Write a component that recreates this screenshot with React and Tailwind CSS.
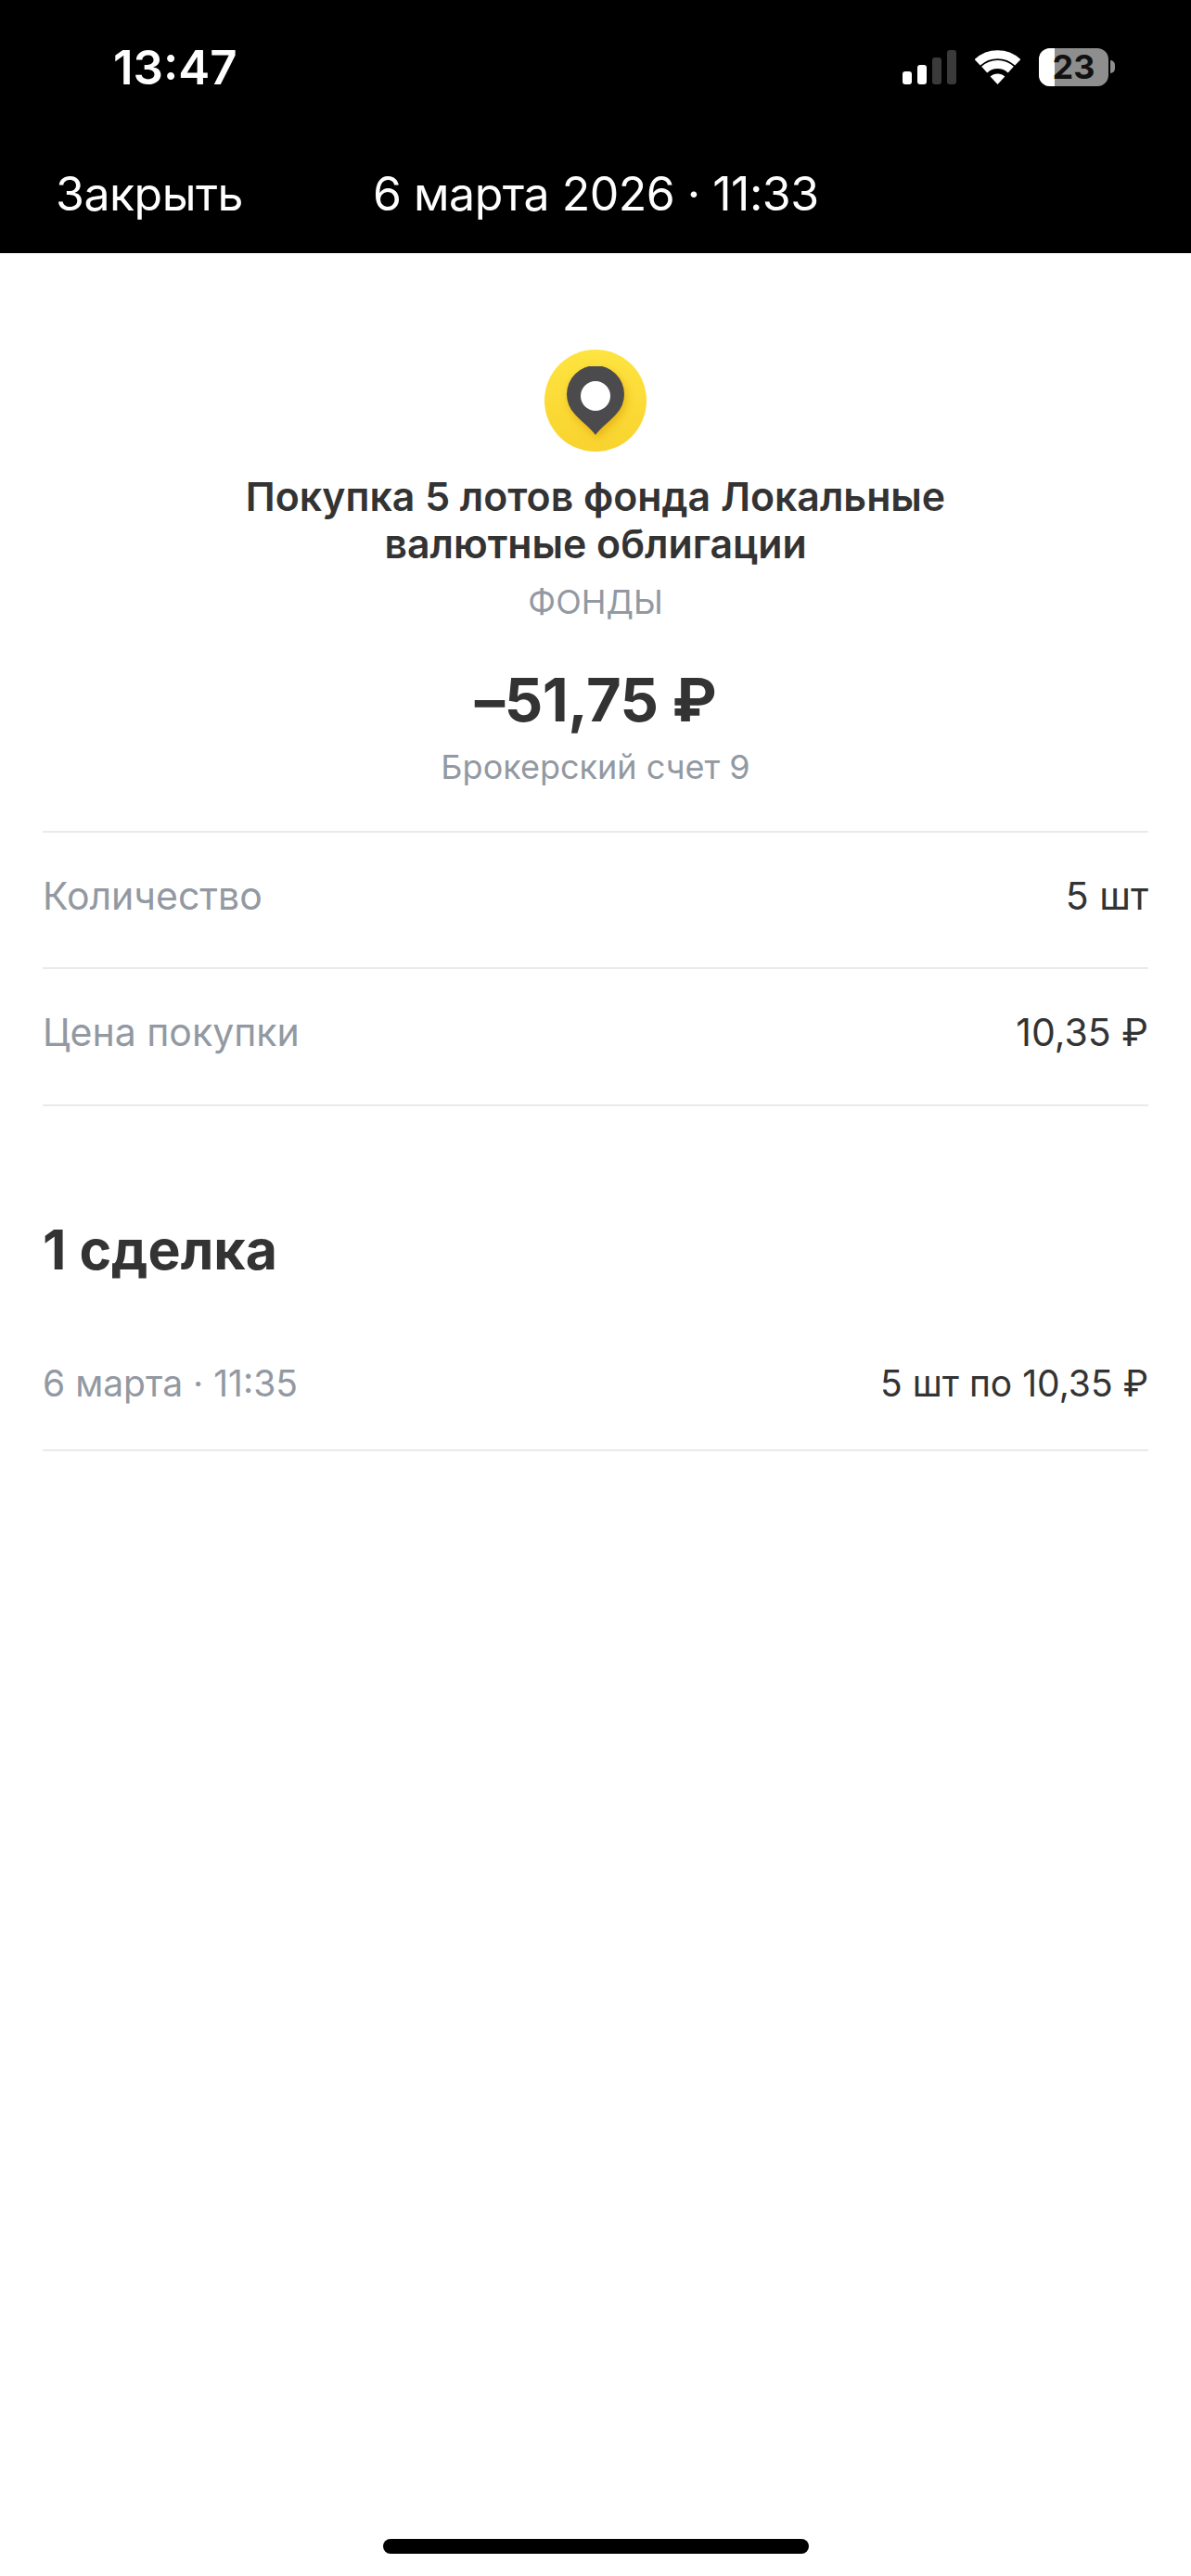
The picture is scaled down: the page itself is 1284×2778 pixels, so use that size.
function StatusIcons() {
  return (
    <div className="flex items-center">
      <div className="flex items-end gap-[6px] h-[37px]">
        <div className="w-[10px] h-[14px] rounded-[3px] bg-white" />
        <div className="w-[10px] h-[21px] rounded-[3px] bg-white" />
        <div className="w-[10px] h-[29px] rounded-[3px] bg-[#3a3a3a]" />
        <div className="w-[10px] h-[37px] rounded-[3px] bg-[#3a3a3a]" />
      </div>
      <svg className="ml-[20px]" width="49" height="37" viewBox="0 0 49 37" fill="none">
        <path d="M2.7 13.3A32 32 0 0 1 46.3 13.3" stroke="#fff" strokeWidth="9" />
        <path d="M10.2 21.1A21 21 0 0 1 38.8 21.1" stroke="#fff" strokeWidth="9" />
        <path d="M24.5 37L16.6 28.6A11.5 11.5 0 0 1 32.4 28.6Z" fill="#fff" />
      </svg>
      <div className="ml-[20px] relative w-[75px] h-[41px] rounded-[12px] overflow-hidden bg-[#8e8e8e] flex items-center justify-center">
        <div className="absolute left-0 top-0 bottom-0 w-[17px] bg-white" />
        <span className="relative text-[36px] font-bold text-[#111] leading-none">23</span>
      </div>
      <div className="ml-[2px] w-[5px] h-[14px] rounded-r-full bg-[#8e8e8e]" />
    </div>
  );
}

function Row({ label, value, className }) {
  return (
    <div className={`flex items-center justify-between border-b-2 border-[#e9eaec] ${className}`}>
      <span className="text-[#9299a2]">{label}</span>
      <span className="text-[#333]">{value}</span>
    </div>
  );
}

export default function App() {
  return (
    <div className="h-[2778px] bg-white flex flex-col font-['Inter',sans-serif]">
      <header className="h-[273px] bg-black text-white shrink-0">
        <div className="flex items-center justify-between pt-[48px] pl-[122px] pr-[82px] h-[96px]">
          <span className="text-[51px] font-semibold leading-none">13:47</span>
          <StatusIcons />
        </div>
        <div className="flex items-center mt-[88px] pl-[60px] text-[50px] leading-none tracking-[-0.5px]">
          <span>Закрыть</span>
          <span className="ml-[140px]">6 марта 2026 · 11:33</span>
        </div>
      </header>

      <main className="px-[46px] flex-1 flex flex-col">
        <section className="flex flex-col items-center text-center border-b-2 border-[#e9eaec] h-[625px] pt-[104px]">
          <div className="w-[110px] h-[110px] rounded-full bg-gradient-to-b from-[#fee440] to-[#f9d32e] flex items-center justify-center">
            <svg width="62" height="74" viewBox="0 0 62 74" className="drop-shadow-[2px_4px_5px_rgba(214,150,0,0.55)]">
              <path d="M31 74C25 66 14 58 9 52A31 31 0 1 1 53 52C48 58 37 66 31 74Z" fill="#4b4b4d" />
              <circle cx="31" cy="32" r="16" fill="#fff" />
            </svg>
          </div>
          <h1 className="mt-[23px] text-[42.8px] leading-[51px] font-semibold text-[#333] w-[800px]">
            Покупка 5 лотов фонда Локальные валютные облигации
          </h1>
          <div className="mt-[15px] text-[36px] leading-[44px] text-[#9299a2]">ФОНДЫ</div>
          <div className="mt-[44px] text-[65px] leading-[80px] font-bold tracking-[-0.5px] text-[#333]">–51,75 ₽</div>
          <div className="mt-[10px] text-[36px] leading-[44px] text-[#9299a2]">Брокерский счет 9</div>
        </section>

        <Row label="Количество" value="5 шт" className="h-[147px] pb-[8px] text-[41px]" />
        <Row label="Цена покупки" value="10,35 ₽" className="h-[148px] pb-[8px] text-[41px]" />

        <h2 className="mt-[120px] text-[59px] leading-[70px] font-bold text-[#333]">1 сделка</h2>

        <Row label="6 марта · 11:35" value="5 шт по 10,35 ₽" className="mt-[39px] h-[143px] text-[39px]" />

        <div className="mt-auto mb-[24px] self-center w-[459px] h-[16px] rounded-full bg-black" />
      </main>
    </div>
  );
}
